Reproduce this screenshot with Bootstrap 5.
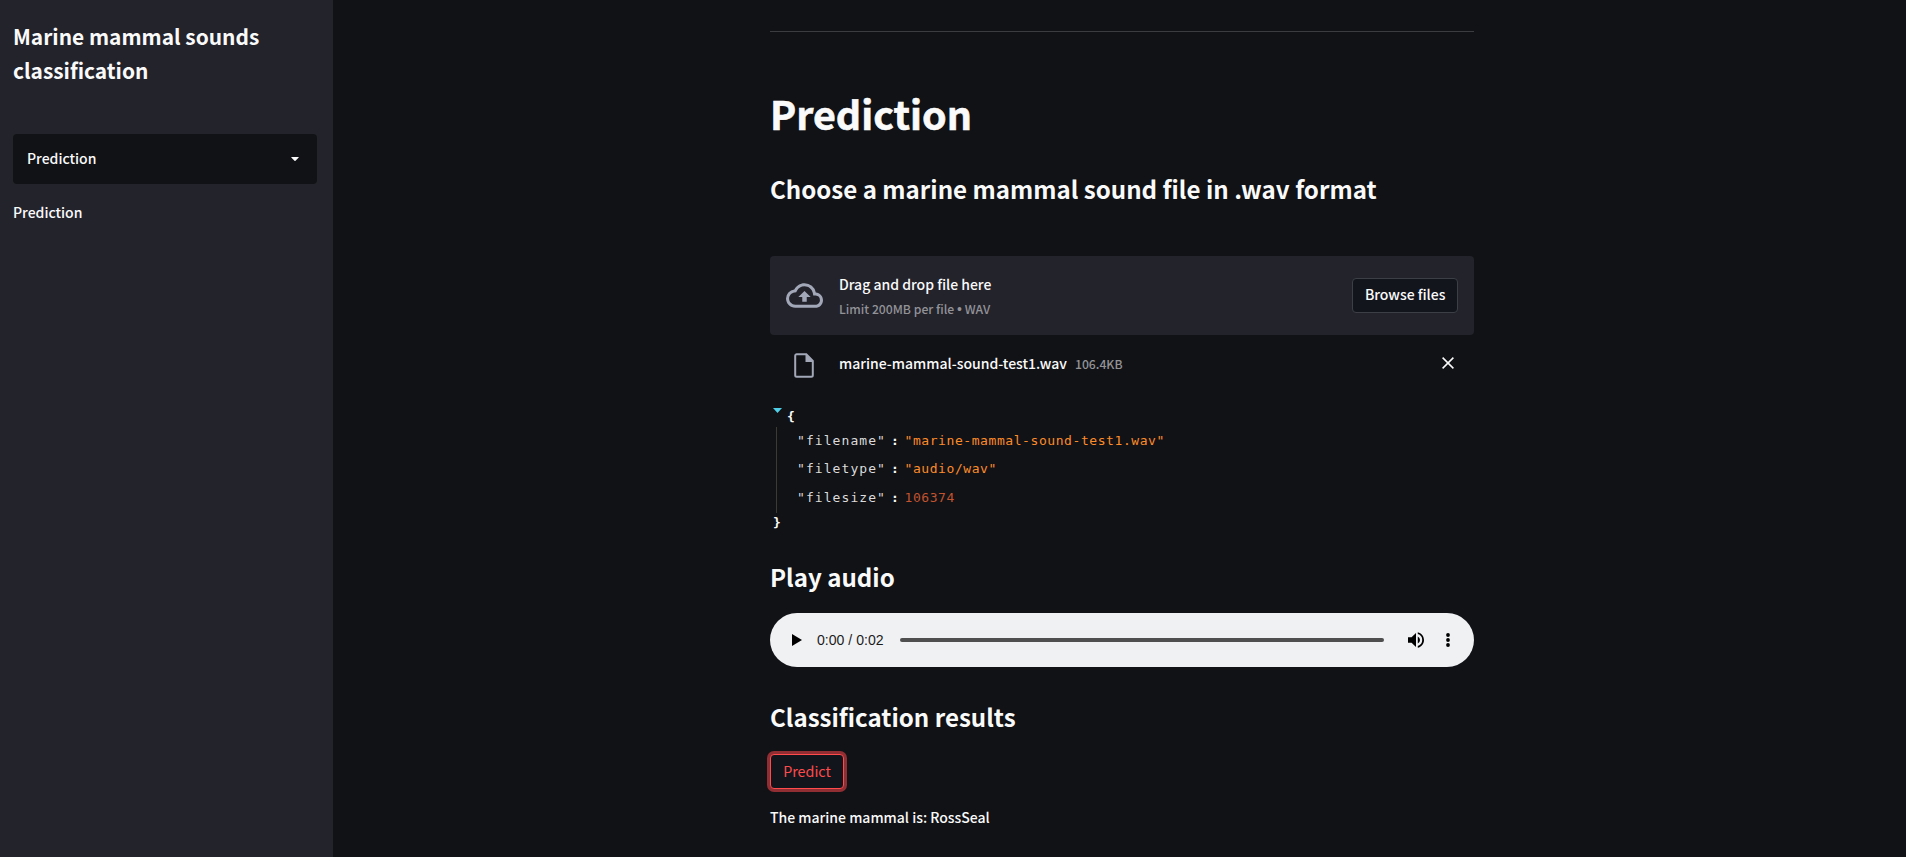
<!DOCTYPE html>
<html lang="en" data-bs-theme="dark">
<head>
<meta charset="utf-8">
<meta name="viewport" content="width=device-width, initial-scale=1">
<title>Marine mammal sounds classification</title>
<link href="https://cdn.jsdelivr.net/npm/bootstrap@5.3.0/dist/css/bootstrap.min.css" rel="stylesheet">
<style>
body{font-family:"Noto Sans CJK SC",sans-serif;font-size:14px;font-weight:500;line-height:26px;background:#111216;color:#fafafa}
.side-panel{width:333px;background:#23232c;padding:19px 16px 0 13px}
.side-title{font-size:20.9px;line-height:34px;font-weight:700;margin-bottom:47px}
.page-select{height:50px;background:#111216;border-radius:4px;padding:0 18px 0 14px;margin-bottom:15px}
.page-select span{margin-top:-3px}
.page-main{padding-left:5px}
.content-col{width:704px;padding-top:31px}
.rule{height:1px;background:#3b3c40;margin-bottom:55px}
h1{font-size:39.4px;line-height:52px;font-weight:700;margin:0 0 33px;color:#fafafa;-webkit-text-stroke:.6px #fafafa}
h2{font-size:24.1px;line-height:34px;font-weight:700;margin:0;color:#fafafa}
.dropzone{height:79px;background:#23232c;border-radius:4px;padding:0 16px;margin-top:50px}
.muted{color:#929297}
.hint{font-size:12.2px;line-height:24px}
.size-hint{padding-top:2px}
.dot{font-family:"Liberation Sans",sans-serif;font-size:14px;line-height:1}
.btn-app{--bs-btn-font-size:14px;--bs-btn-font-weight:500;--bs-btn-line-height:23px;--bs-btn-padding-x:11.6px;--bs-btn-padding-y:4px;--bs-btn-color:#fafafa;--bs-btn-bg:#13151d;--bs-btn-border-color:#3d3f46;--bs-btn-border-radius:4px;--bs-btn-hover-bg:#13151d;height:35px;padding-bottom:6px;padding-top:3px;white-space:nowrap}
.btn-hot{--bs-btn-color:#ff4b4b;--bs-btn-border-color:#ff4b4b;--bs-btn-font-weight:400;--bs-btn-font-size:14.3px;--bs-btn-hover-color:#ff4b4b;--bs-btn-hover-border-color:#ff4b4b;width:74px;margin:20px 0 15px;box-shadow:0 0 0 3px #912e33}
.file-row{height:55px;padding:0 16px;margin-bottom:17px}
.file-icon{margin-top:5px}
.file-name{margin-left:25px}
.json{font-family:"DejaVu Sans Mono",monospace;font-size:13px;font-weight:400;letter-spacing:.574px;line-height:20px}
.json-head{padding-left:3px;gap:5px}
.json-head svg{margin-top:1px}
.json-body{border-left:1px solid #3c3a35;margin-left:6px;padding-left:20px;height:86px}
.json-row{height:28.4px;line-height:27.6px}
.json-key{letter-spacing:1.07px;width:94px;color:#dbdbdb}
.json-sep{width:13.5px;font-weight:700}
.json-end{padding-left:3px}
.str{color:#fd8b2a}
.num{color:#c1532f}
.player{height:54px;border-radius:27px;background:#f0f1f3;color:#1c1c1c;padding:0 24px 0 22px;margin:19px 0 25px;font:14.1px "Liberation Sans",sans-serif}
.time{margin-left:15px}
.track{height:4px;border-radius:2px;background:#4f4f50;margin:0 24px 0 16px}
.dots{margin-left:22px}
.play-title{margin-top:27px}
</style>
</head>
<body class="vh-100 overflow-hidden">
<div class="d-flex h-100">
  <aside class="side-panel flex-shrink-0">
    <div class="side-title">Marine mammal sounds classification</div>
    <div class="page-select d-flex align-items-center justify-content-between">
      <span>Prediction</span>
      <svg width="8" height="4" viewBox="0 0 8 4" fill="#fafafa"><path d="M.6 0h6.8q.6 0 .3.5L4.5 3.7q-.5.4-1 0L.3.5Q0 0 .6 0z"/></svg>
    </div>
    <div>Prediction</div>
  </aside>
  <main class="page-main flex-grow-1 d-flex justify-content-center">
    <div class="content-col">
      <div class="rule"></div>
      <h1>Prediction</h1>
      <h2>Choose a marine mammal sound file in .wav format</h2>

      <div class="dropzone d-flex align-items-center">
        <svg class="flex-shrink-0" width="37" height="25" viewBox="0 4 24 16" fill="#a3a8b8"><path d="M19.35 10.04A7.49 7.49 0 0 0 12 4C9.11 4 6.6 5.64 5.35 8.04A5.994 5.994 0 0 0 0 14c0 3.31 2.69 6 6 6h13c2.76 0 5-2.24 5-5 0-2.64-2.05-4.78-4.65-4.96zM19 18H6c-2.21 0-4-1.79-4-4 0-2.05 1.53-3.76 3.56-3.97l1.07-.11.5-.95A5.469 5.469 0 0 1 12 6c2.62 0 4.88 1.86 5.39 4.43l.3 1.5 1.53.11A2.98 2.98 0 0 1 22 15c0 1.65-1.35 3-3 3zM8 13h2.55v3h2.9v-3H16l-4-4z"/></svg>
        <div class="flex-grow-1 ms-3">
          <div>Drag and drop file here</div>
          <div class="hint muted">Limit 200MB per file <span class="dot">•</span> WAV</div>
        </div>
        <button class="btn btn-app" type="button">Browse files</button>
      </div>

      <div class="file-row d-flex align-items-center">
        <svg class="file-icon ms-2 flex-shrink-0" width="20" height="25" viewBox="0 0 20 25"><path d="M2.5 1.2h9.8L18.8 8v14.3q0 1.5-1.5 1.5H2.7q-1.5 0-1.5-1.5V2.7q0-1.5 1.3-1.5z" fill="none" stroke="#a3a8b8" stroke-width="2"/><path d="M11.5 1v8H19z" fill="#a3a8b8"/></svg>
        <span class="file-name">marine-mammal-sound-test1.wav</span>
        <span class="hint size-hint muted ms-2">106.4KB</span>
        <svg class="ms-auto me-1" width="12" height="12" viewBox="0 0 12 12" stroke="#fafafa" stroke-width="1.5"><path d="M.6.6l10.8 10.8M11.4.6L.6 11.4"/></svg>
      </div>

      <div class="json">
        <div class="json-head d-flex align-items-start">
          <svg width="9" height="5" viewBox="0 0 9 5" fill="#4fd0e8"><path d="M0 0h9L4.5 5z"/></svg>
          <b>{</b>
        </div>
        <div class="json-body">
          <div class="json-row d-flex"><span class="json-key">"filename"</span><span class="json-sep">:</span><span class="str">"marine-mammal-sound-test1.wav"</span></div>
          <div class="json-row d-flex"><span class="json-key">"filetype"</span><span class="json-sep">:</span><span class="str">"audio/wav"</span></div>
          <div class="json-row d-flex"><span class="json-key">"filesize"</span><span class="json-sep">:</span><span class="num">106374</span></div>
        </div>
        <div class="json-end"><b>}</b></div>
      </div>

      <h2 class="play-title">Play audio</h2>
      <div class="player d-flex align-items-center">
        <svg width="10" height="12" viewBox="0 0 10 12"><path d="M0 0v12l10-6z"/></svg>
        <span class="time">0:00 / 0:02</span>
        <div class="track flex-grow-1"></div>
        <svg width="16" height="16" viewBox="3 3 18 18"><path d="M3 9v6h4l5 5V4L7 9H3zm13.5 3A4.5 4.5 0 0 0 14 7.97v8.05A4.49 4.49 0 0 0 16.5 12zM14 3.23v2.06a7.003 7.003 0 0 1 0 13.42v2.06c4.01-.91 7-4.49 7-8.77s-2.99-7.86-7-8.77z"/></svg>
        <svg class="dots" width="4" height="14" viewBox="0 0 4 14"><circle cx="2" cy="2" r="1.9"/><circle cx="2" cy="7" r="1.9"/><circle cx="2" cy="12" r="1.9"/></svg>
      </div>

      <h2 class="pt-2">Classification results</h2>
      <button class="btn btn-app btn-hot d-block" type="button">Predict</button>
      <div>The marine mammal is: RossSeal</div>
    </div>
  </main>
</div>
<script src="https://cdn.jsdelivr.net/npm/bootstrap@5.3.0/dist/js/bootstrap.bundle.min.js"></script>
</body>
</html>
